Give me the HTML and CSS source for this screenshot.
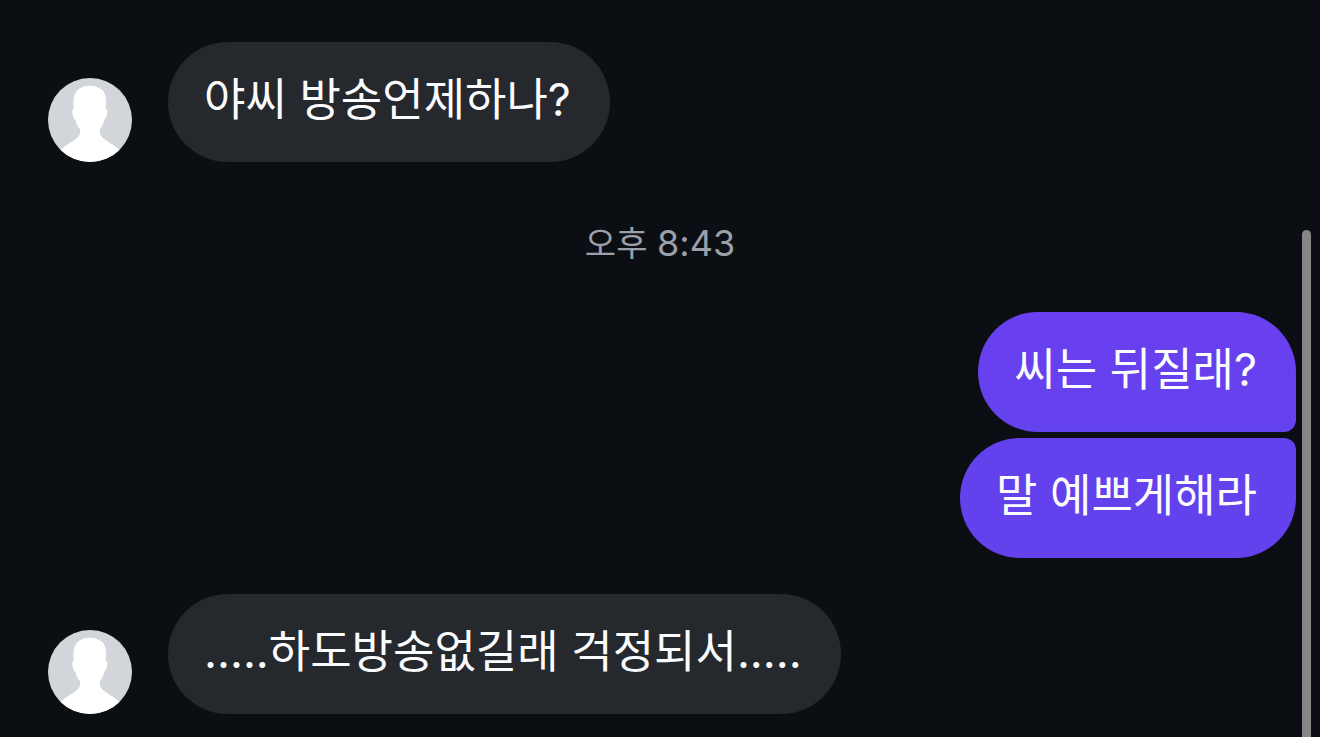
FILE: index.html
```html
<!DOCTYPE html>
<html lang="ko">
<head>
<meta charset="utf-8">
<meta name="viewport" content="width=device-width, initial-scale=1">
<title>채팅</title>
<link rel="stylesheet" href="styles.css">
</head>
<body>
<svg class="symbols" aria-hidden="true">
  <symbol id="person" viewBox="0 0 84 84">
    <path fill="#d2d5da" d="M0 0H84V84H0Z"/>
    <path fill="#fff" d="M14 70.500C19 66 25 63.500 28.500 60.500C32 57.500 32.500 55 32 51C29.500 48.500 28 45 27.500 42C25.500 41 24.500 37 24.300 34C24.200 32 24.700 31 25.700 31L25.500 24C25.500 14 31 7.800 41.500 7.800C46 7.800 49 8.500 50.500 10C55 10.500 58 16 58 23L57.700 31C59 31 59.500 32 59.300 34C59 37 58 41 56 42C55.500 46 54 49 52 51C52 55 52 57.500 55 60C59 63.500 65 66 70 70.500L78 84H6Z"/>
  </symbol>
</svg>
<main class="chat">
  <div class="message received">
    <svg class="avatar" role="img" aria-label="프로필"><use href="#person"/></svg>
    <p class="bubble">야씨 방송언제하나?</p>
  </div>
  <time class="timestamp" datetime="20:43">오후 <span class="clock">8:43</span></time>
  <div class="message sent">
    <p class="bubble first">씨는 뒤질래?</p>
    <p class="bubble last">말 예쁘게해라</p>
  </div>
  <div class="message received">
    <svg class="avatar" role="img" aria-label="프로필"><use href="#person"/></svg>
    <p class="bubble">.....하도방송없길래 걱정되서.....</p>
  </div>
</main>
<div class="scroll-thumb" aria-hidden="true"></div>
</body>
</html>
```

FILE: styles.css
```css
* {
  box-sizing: border-box;
}

body {
  margin: 0;
  background: #0b0e13;
  color: #fafbfc;
  font-family: Inter, "Noto Sans CJK KR", sans-serif;
}

.symbols {
  position: absolute;
  width: 0;
  height: 0;
}

.chat {
  display: flex;
  flex-direction: column;
  min-height: 100vh;
  padding: 42px 0 23px;
}

.message {
  display: flex;
  padding: 0 24px 0 48px;
}

.received {
  align-items: flex-end;
  gap: 36px;
}

.avatar {
  flex: none;
  width: 84px;
  height: 84px;
  border-radius: 50%;
}

.bubble {
  margin: 0;
  padding: 28px 39px 32px 36px;
  border-radius: 60px;
  background: #25282d;
  font-size: 45px;
  line-height: 60px;
}

.timestamp {
  align-self: center;
  margin: 57px 0 44px;
  color: #9b9fa9;
  font-size: 34px;
  line-height: 48px;
}

.clock {
  font-size: 36px;
}

.sent {
  flex-direction: column;
  align-items: flex-end;
  gap: 6px;
  margin-bottom: 36px;
}

.sent .bubble {
  background: linear-gradient(#6a3fef, #6442ee);
}

.sent .first {
  border-bottom-right-radius: 12px;
}

.sent .last {
  border-top-right-radius: 12px;
  background: #6342ee;
}

.scroll-thumb {
  position: fixed;
  top: 230px;
  right: 9px;
  bottom: -9px;
  width: 9px;
  border-radius: 5px;
  background: #868686;
}
```
